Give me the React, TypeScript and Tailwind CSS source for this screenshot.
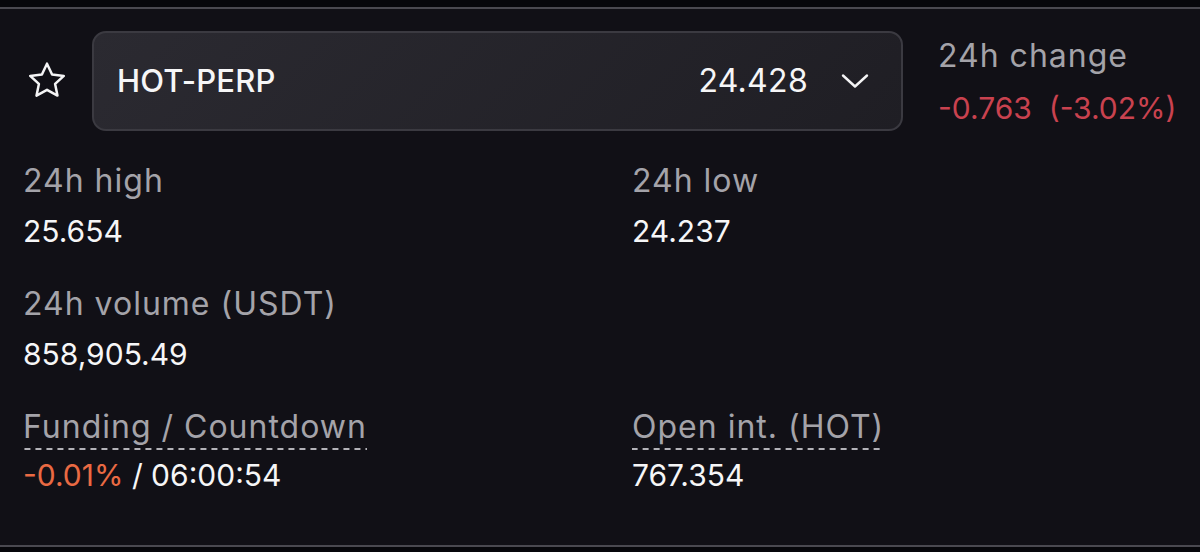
import React from 'react';

type Stat = {
  label: string;
  value: React.ReactNode;
  dashed?: boolean;
};

const font = { fontFamily: 'Inter, "Noto Sans", sans-serif' };

function StarIcon() {
  return (
    <svg width="40" height="40" viewBox="0 0 24 24" fill="none" stroke="#f4f4f5" strokeWidth="1.5" strokeLinejoin="round">
      <path d="M12 1.6l3.05 6.55 7.05.8-5.24 4.82 1.42 7.0L12 17.3l-6.28 3.47 1.42-7.0L1.9 8.95l7.05-.8L12 1.6z" />
    </svg>
  );
}

function Chevron() {
  return (
    <svg width="28" height="16" viewBox="0 0 28 16" fill="none" stroke="#f4f4f5" strokeWidth="2.4" strokeLinecap="round" strokeLinejoin="round">
      <path d="M2 2.5l12 11 12-11" />
    </svg>
  );
}

function StatBlock({ label, value, dashed }: Stat) {
  return (
    <div className="flex flex-col">
      <div className="h-[40px] flex items-start">
        <span
          className={
            dashed
              ? 'text-[32px] leading-[40px] tracking-[1px] text-[#a4a3a9] pb-[3px] bg-[linear-gradient(to_right,#b3b2b8_55%,transparent_0)] bg-[length:11px_2px] bg-repeat-x bg-bottom'
              : 'text-[32px] leading-[40px] tracking-[1px] text-[#a4a3a9]'
          }
        >
          {label}
        </span>
      </div>
      <div className={dashed ? 'mt-[8px] text-[30px] leading-[40px] text-[#f6f6f7]' : 'mt-[10px] text-[30px] leading-[40px] text-[#f6f6f7]'}>
        {value}
      </div>
    </div>
  );
}

export default function App() {
  const stats: Stat[] = [
    { label: '24h high', value: '25.654' },
    { label: '24h low', value: '24.237' },
    { label: '24h volume (USDT)', value: '858,905.49' },
    { label: '', value: '' },
    {
      label: 'Funding / Countdown',
      dashed: true,
      value: (
        <>
          <span className="text-[#ea6a43]">-0.01%</span> / 06:00:54
        </>
      ),
    },
    { label: 'Open int. (HOT)', value: '767.354', dashed: true },
  ];

  return (
    <div className="w-[1200px] h-[552px] bg-[#07070b] pt-[7px] overflow-hidden" style={font}>
      <div className="h-[540px] bg-[#111016] border-t-2 border-b-2 border-[#4a4950]">
        <div className="flex items-start pt-[22px]">
          <div className="w-[92px] h-[100px] flex items-center justify-center pl-[2px]">
            <StarIcon />
          </div>
          <div className="w-[811px] h-[100px] rounded-[14px] border-2 border-[#3b3a41] bg-[linear-gradient(135deg,#2b2a31,#1f1e24)] flex items-center pl-[23px] pr-[32px]">
            <span className="text-[31px] text-[#f6f6f7] font-medium tracking-[0.2px]">HOT-PERP</span>
            <span className="ml-auto text-[32px] text-[#f6f6f7] tracking-[0.3px]">24.428</span>
            <span className="ml-[33px]">
              <Chevron />
            </span>
          </div>
          <div className="ml-[35px] flex flex-col pt-[5px]">
            <span className="text-[32px] leading-[40px] tracking-[1px] text-[#a4a3a9]">24h change</span>
            <span className="mt-[12px] text-[30px] leading-[40px] text-[#c9424f] whitespace-pre">-0.763  (-3.02%)</span>
          </div>
        </div>
        <div className="grid grid-cols-[609px_1fr] pl-[23px] pt-[30px] gap-y-[33px]">
          {stats.map((s, i) =>
            s.label ? <StatBlock key={i} {...s} /> : <div key={i} />
          )}
        </div>
      </div>
    </div>
  );
}
